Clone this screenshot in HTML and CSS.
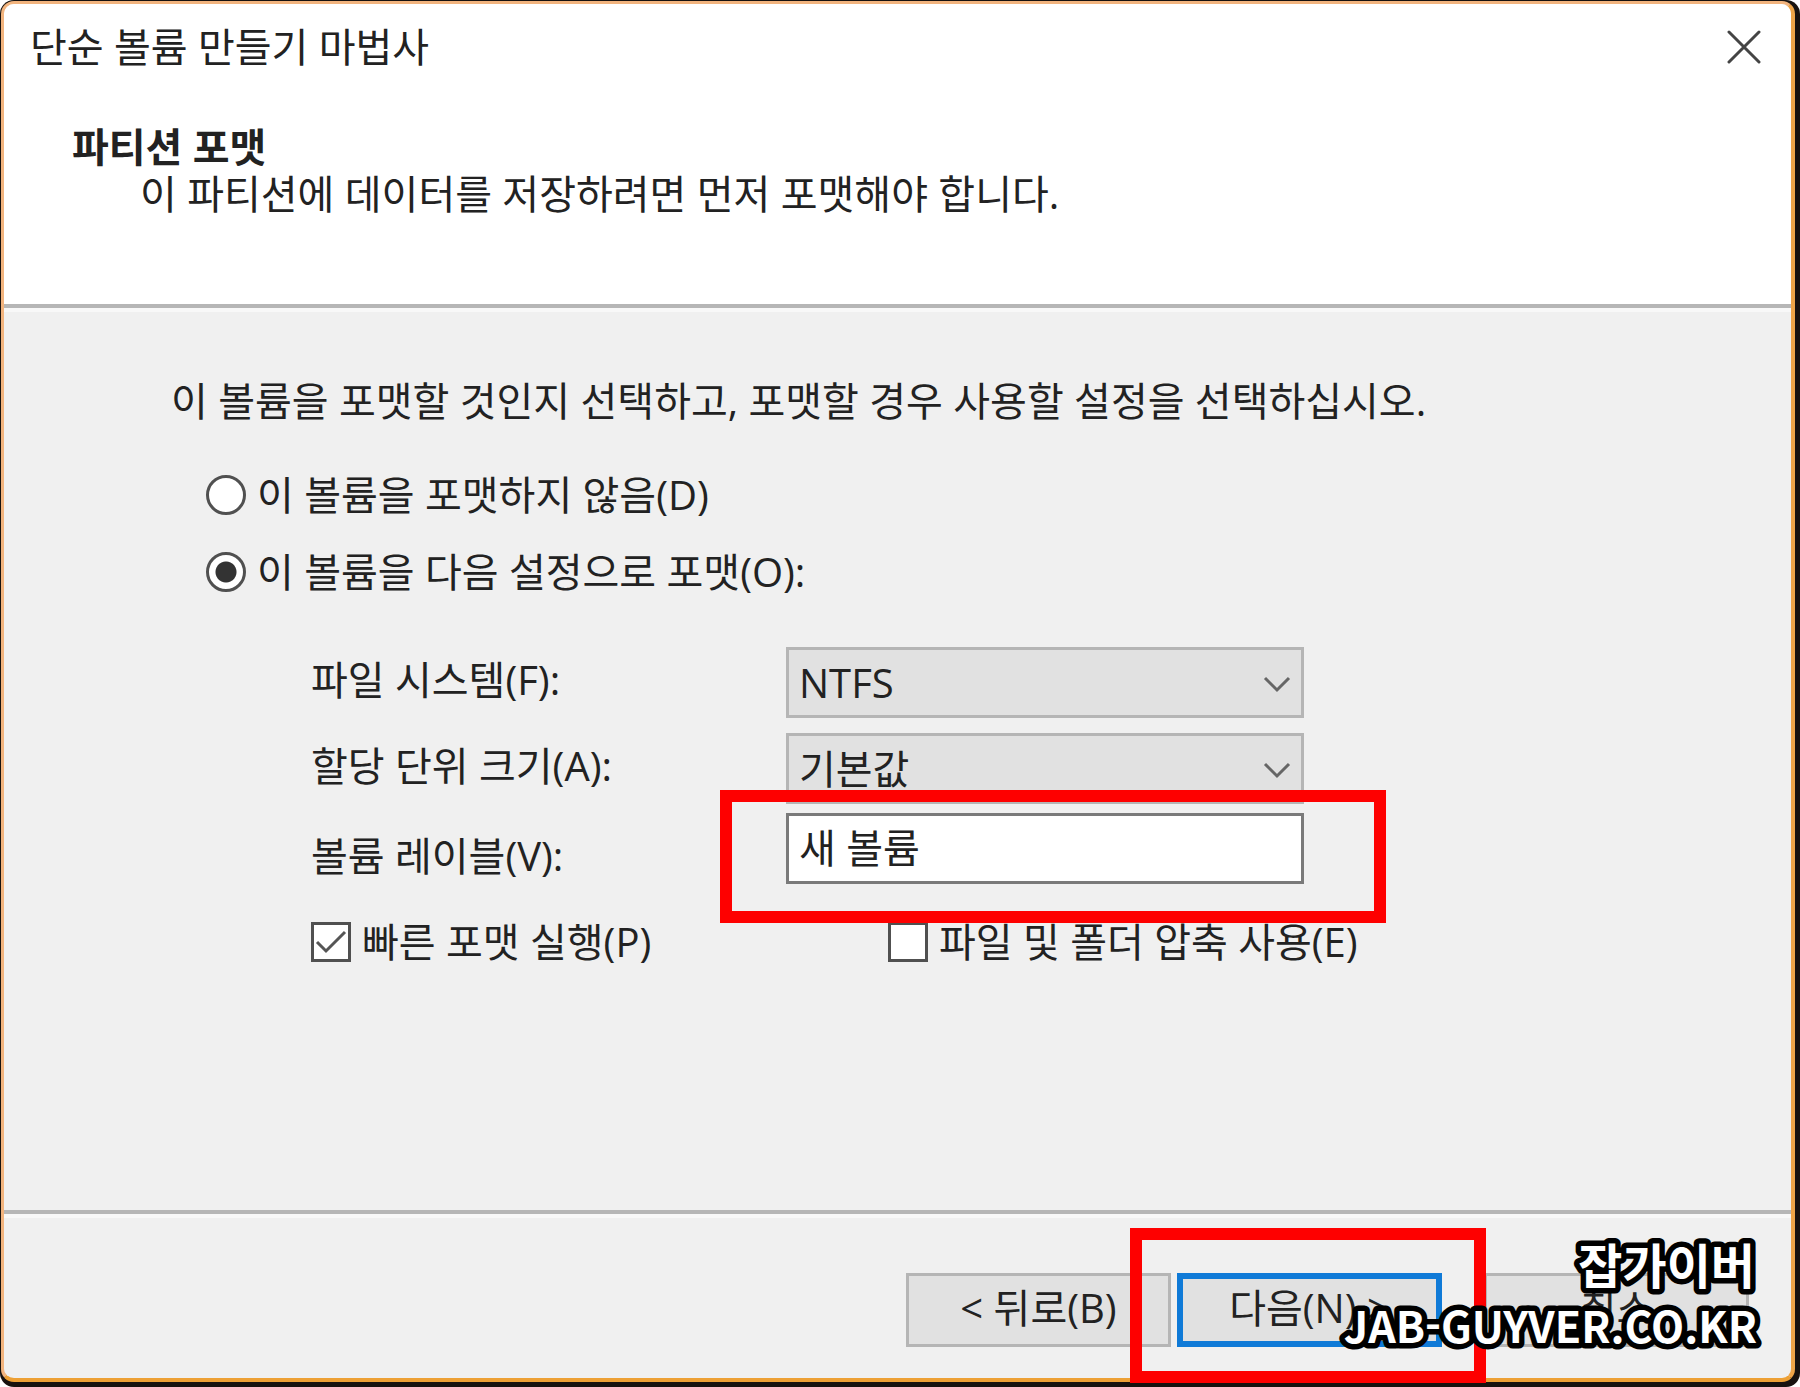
FILE: index.html
```
<!DOCTYPE html>
<html lang="ko">
<head>
    <meta charset="UTF-8">
    <meta name="viewport" content="width=device-width, initial-scale=1.0">
    <title>단순 볼륨 만들기 마법사</title>
    <link rel="stylesheet" href="styles.css">
</head>
<body>
    <div class="frame">
        <form class="wizard">
            <header class="wizard-header">
                <div class="title-bar">
                    <span>단순 볼륨 만들기 마법사</span>
                    <button type="button" class="close-button" aria-label="닫기">
                        <svg width="34" height="34" viewBox="0 0 34 34" fill="none" stroke="#444" stroke-width="3" stroke-linecap="round">
                            <path d="M2 2L32 32M32 2L2 32"/>
                        </svg>
                    </button>
                </div>
                <h1>파티션 포맷</h1>
                <p>이 파티션에 데이터를 저장하려면 먼저 포맷해야 합니다.</p>
            </header>

            <main class="wizard-body">
                <p class="intro">이 볼륨을 포맷할 것인지 선택하고, 포맷할 경우 사용할 설정을 선택하십시오.</p>

                <div class="options">
                    <label class="choice"><input type="radio" name="format">이 볼륨을 포맷하지 않음(D)</label>
                    <label class="choice"><input type="radio" name="format" checked>이 볼륨을 다음 설정으로 포맷(O):</label>
                </div>

                <div class="fields">
                    <label class="field-label" for="file-system">파일 시스템(F):</label>
                    <div class="control">
                        <select id="file-system"><option>NTFS</option></select>
                        <svg class="chevron" width="28" height="18" viewBox="0 0 28 18" fill="none" stroke="#666" stroke-width="3"><path d="M2 3L14 15L26 3"/></svg>
                    </div>

                    <label class="field-label" for="unit-size">할당 단위 크기(A):</label>
                    <div class="control">
                        <select id="unit-size"><option>기본값</option></select>
                        <svg class="chevron" width="28" height="18" viewBox="0 0 28 18" fill="none" stroke="#666" stroke-width="3"><path d="M2 3L14 15L26 3"/></svg>
                    </div>

                    <label class="field-label volume-label" for="volume">볼륨 레이블(V):</label>
                    <div class="control">
                        <input type="text" id="volume" value="새 볼륨">
                        <span class="highlight highlight-field"></span>
                    </div>
                </div>

                <div class="checks">
                    <label class="choice"><input type="checkbox" checked>빠른 포맷 실행(P)</label>
                    <label class="choice"><input type="checkbox">파일 및 폴더 압축 사용(E)</label>
                </div>
            </main>

            <footer class="wizard-footer">
                <button type="button">&lt; 뒤로(B)</button>
                <div class="next">
                    <button type="submit" class="primary">다음(N) &gt;</button>
                    <span class="highlight highlight-next"></span>
                </div>
                <button type="button" class="cancel">취소</button>
            </footer>
        </form>

        <svg class="watermark" width="440" height="130" viewBox="0 0 440 130">
            <text class="watermark-name" x="431" y="57">잡가이버</text>
            <text class="watermark-site" x="433" y="116">JAB-GUYVER.CO.KR</text>
        </svg>
    </div>
</body>
</html>
```
FILE: styles.css
```
* { box-sizing: border-box; }
body { margin: 0; background: #fff; color: #222; font: 40px/42px "Open Sans", "Noto Sans CJK KR", sans-serif; }
h1, p { margin: 0; font-size: 40px; line-height: 42px; }
button, input, select { font: inherit; color: inherit; margin: 0; }

/* Window frame */
.frame { position: relative; display: flex; min-height: 100vh; padding: 1px 5px 5px 1px; background: #17120f; border-radius: 14px; }
.wizard { flex: 1; display: flex; flex-direction: column; background: #f0f0f0; border: 3px solid #f2b47e; border-right: 4px solid #eea548; border-bottom: 4px solid #eda035; border-radius: 13px; }

.wizard-header { height: 304px; background: #fff; border-bottom: 4px solid #b6b6b6; border-radius: 10px 10px 0 0; }
.title-bar { display: flex; justify-content: space-between; align-items: center; padding: 22px 30px 0 26px; }
.close-button { display: flex; padding: 0; border: none; background: none; }
.wizard-header h1 { margin: 58px 0 0 68px; font-weight: bold; }
.wizard-header p { margin: 5px 0 0 136px; }

/* Format settings */
.wizard-body { flex: 1; padding: 68px 0 0 167px; border-top: 4px solid #f8f8f8; }
.options { display: flex; flex-direction: column; gap: 35px; margin: 52px 0 0 35px; }
.choice { display: flex; align-items: center; gap: 11px; height: 42px; white-space: nowrap; }
.fields { display: grid; grid-template-columns: 475px 518px; grid-template-rows: 86px 80px 86px; margin: 54px 0 0 140px; }
.field-label { line-height: 66px; }
.volume-label { align-self: center; }
.control { position: relative; height: 71px; }
.control select, .control input { width: 100%; height: 100%; padding: 0 10px; border: 3px solid #b5b5b5; border-radius: 0; outline: none; }
.control select { appearance: none; background: #e1e1e1; }
.control input { padding-bottom: 6px; border-color: #7a7a7a; background: #fff; }
.chevron { position: absolute; right: 13px; top: 28px; pointer-events: none; }
.checks { display: grid; grid-template-columns: 577px auto; margin: 22px 0 0 140px; }

input[type="radio"], input[type="checkbox"] { appearance: none; flex: none; width: 40px; height: 40px; border: 3px solid #505050; background: #fff; }
input[type="radio"] { border-radius: 50%; }
input[type="radio"]:checked { background: radial-gradient(circle, #333 10px, #fff 11px); }
input[type="checkbox"]:checked { background: #fff url("data:image/svg+xml,%3Csvg xmlns='http://www.w3.org/2000/svg' viewBox='0 0 34 34' fill='none' stroke='%23555' stroke-width='3'%3E%3Cpath d='M3 17L12 26L31 7'/%3E%3C/svg%3E"); }

/* Buttons */
.wizard-footer { display: flex; justify-content: flex-end; height: 168px; padding: 59px 42px 0 0; border-top: 4px solid #b6b6b6; box-shadow: inset 0 4px #f8f8f8; }
.wizard-footer button { width: 265px; height: 74px; padding: 0 0 4px; border: 3px solid #b5b5b5; background: #e1e1e1; white-space: pre; }
.wizard-footer .primary { border: 6px solid #0f7ad7; }
.next { position: relative; height: 74px; margin: 0 42px 0 6px; }

/* Red markers */
.highlight { position: absolute; z-index: 1; border: 12px solid #fe0000; pointer-events: none; }
.highlight-field { inset: -23px -82px -39px -66px; }
.highlight-next { inset: -45px -44px -36px -47px; }

.watermark { position: absolute; z-index: 2; right: 36px; bottom: 30px; overflow: visible; fill: #fff; stroke: #000; stroke-width: 11px; stroke-linejoin: round; paint-order: stroke fill; text-anchor: end; font-family: "Noto Sans CJK KR", sans-serif; font-weight: bold; pointer-events: none; }
.watermark-name { font-size: 48px; }
.watermark-site { font-size: 43px; }
```
